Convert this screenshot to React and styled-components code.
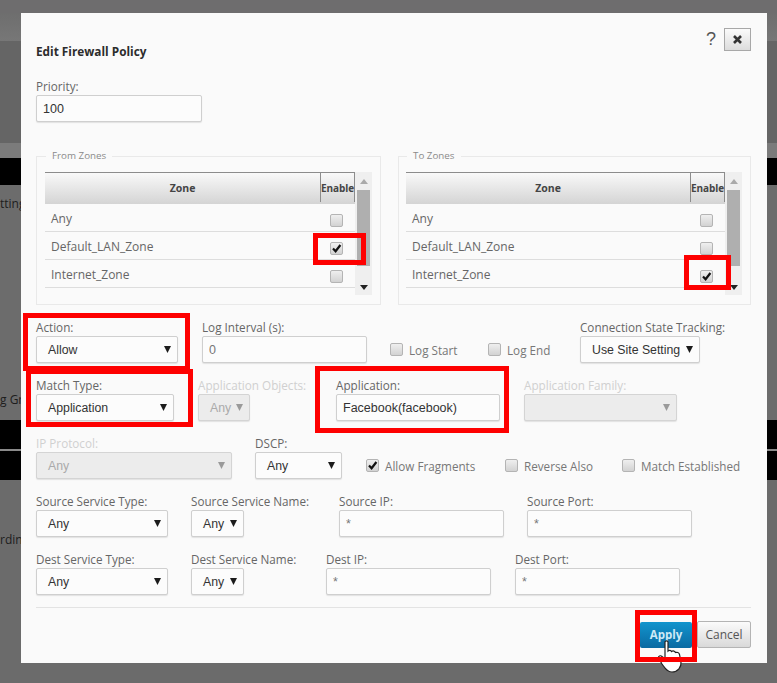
import React from 'react';
import styled, { createGlobalStyle } from 'styled-components';

const GlobalStyle = createGlobalStyle`
	html, body {
		margin: 0;
		padding: 0;
		background: #6b6b6b;
	}
	body {
		font-family: "Open Sans", "Liberation Sans", sans-serif;
		overflow: hidden;
	}
`;

const Page = styled.div`
	position: relative;
	width: 777px;
	height: 683px;
	overflow: hidden;
`;
const Backdrop = styled.div`
	display: flex;
	flex-direction: column;
	height: 100%;
`;
const Strip = styled.div`
	height: ${({ $h }) => $h}px;
	flex: ${({ $grow }) => ($grow ? 1 : 'none')};
	background: ${({ $bg }) => $bg};
`;
const Peek = styled.div`
	width: 21px;
	overflow: hidden;
	display: flex;
	justify-content: flex-start;
	padding-top: ${({ $top }) => $top}px;
	font-size: 12px;
	line-height: 16px;
	color: #1d1d1d;
	white-space: nowrap;
`;
const Modal = styled.div`
	position: absolute;
	top: 13px;
	left: 21px;
	width: 746px;
	height: 650px;
	box-sizing: border-box;
	padding: 15px 16px 0 15px;
	background: #fafafa;
`;
const Header = styled.div`
	display: flex;
	justify-content: space-between;
	height: 51px;
`;
const Title = styled.div`
	margin-top: 15px;
	font-size: 11.8px;
	line-height: 16px;
	font-weight: 700;
	color: #2c2c2c;
`;
const HeaderTools = styled.div`
	display: flex;
	gap: 8px;
`;
const Help = styled.span`
	font-family: "Liberation Sans", sans-serif;
	font-size: 18px;
	line-height: 23px;
	color: #555;
`;
const CloseButton = styled.div`
	width: 27px;
	height: 23px;
	box-sizing: border-box;
	display: flex;
	align-items: center;
	justify-content: center;
	border: 1px solid #a8a8a8;
	background: linear-gradient(#fbfbfb, #dcdcdc);
`;
const Label = styled.div`
	height: 16px;
	font-size: 11.7px;
	line-height: 15px;
	white-space: nowrap;
	color: ${({ $disabled }) => ($disabled ? '#d0d0d0' : '#666')};
`;
const Field = styled.div`
	position: relative;
	width: ${({ $w }) => $w}px;
`;
const TextInput = styled.input`
	display: block;
	width: 100%;
	height: 27px;
	box-sizing: border-box;
	padding: 0 6px;
	border: 1px solid #cfcfcf;
	border-radius: 2px;
	background: #fcfcfc;
	box-shadow: 0 1px 1px #e2e2e2;
	outline: none;
	font-family: "Liberation Sans", sans-serif;
	font-size: 12.5px;
	color: ${({ $dark }) => ($dark ? '#333' : '#777')};
`;
const SelectBox = styled.div`
	display: flex;
	align-items: center;
	justify-content: space-between;
	height: 27px;
	box-sizing: border-box;
	padding: 0 6px 0 11px;
	border: 1px solid ${({ $disabled }) => ($disabled ? '#d4d4d4' : '#cfcfcf')};
	border-radius: 2px;
	background: ${({ $disabled }) => ($disabled ? '#ececec' : '#fcfcfc')};
	box-shadow: 0 1px 1px #e2e2e2;
	font-family: "Liberation Sans", sans-serif;
	font-size: 12.3px;
	white-space: nowrap;
	color: ${({ $disabled }) => ($disabled ? '#aaa' : '#333')};
`;
const Caret = styled.svg`
	flex: none;
	width: 7px;
	height: 7px;
	fill: ${({ $disabled }) => ($disabled ? '#9a9a9a' : '#1c1c1c')};
`;
const Zones = styled.div`
	display: grid;
	grid-template-columns: 345px 353px;
	gap: 17px;
	margin-top: 27px;
`;
const ZoneSet = styled.fieldset`
	margin: 0;
	min-width: 0;
	height: 156px;
	box-sizing: border-box;
	padding: 9px 8px 0 ${({ $padLeft }) => $padLeft}px;
	border: 1px solid #e9e9e9;
`;
const ZoneLegend = styled.legend`
	margin-left: 1px;
	padding: 0 6px;
	font-size: 9.8px;
	line-height: 14px;
	color: #8a8a8a;
`;
const ZoneInner = styled.div`
	display: flex;
	height: 123px;
`;
const ZoneTable = styled.div`
	width: ${({ $w }) => $w}px;
`;
const ZoneHead = styled.div`
	display: grid;
	grid-template-columns: 1fr 35px;
	height: 32px;
	box-sizing: border-box;
	border-top: 1px solid #8c8c8c;
	background: linear-gradient(#f9f9f9, #d4d4d4);
	font-size: 10.5px;
	font-weight: 700;
	line-height: 31px;
	color: #444;
	text-align: center;
`;
const EnableHead = styled.div`
	border-left: 1px solid #8c8c8c;
	border-right: 1px solid #8c8c8c;
	height: 29px;
	font-size: 10px;
	letter-spacing: -0.1px;
`;
const ZoneRow = styled.div`
	display: grid;
	grid-template-columns: 1fr 35px;
	align-items: center;
	height: 28px;
	box-sizing: border-box;
	padding: 2px 0 0 6px;
	border-bottom: 1px solid #dddddd;
	font-size: 12px;
	color: #666;
`;
const CheckCell = styled.div`
	display: flex;
	justify-content: center;
	padding: 4px 2px 0 0;
`;
const Scrollbar = styled.div`
	flex: none;
	width: 17px;
	display: flex;
	flex-direction: column;
	align-items: center;
	background: #efefef;
`;
const ScrollArrow = styled.svg`
	flex: none;
	width: 8px;
	height: 5px;
	margin: ${({ $m }) => $m};
	fill: ${({ $dark }) => ($dark ? '#222' : '#aaa')};
`;
const ScrollThumb = styled.div`
	width: 13px;
	flex: 1;
	background: #afafaf;
`;
const Box = styled.div`
	position: relative;
	flex: none;
	width: 13px;
	height: 13px;
	box-sizing: border-box;
	border: 1px solid #b4b4b4;
	border-radius: 2px;
	background: linear-gradient(#efefef, #d2d2d2);
`;
const CheckMark = styled.svg`
	display: block;
	width: 11px;
	height: 11px;
	stroke: #111;
	stroke-width: 2.2;
	fill: none;
`;
const CheckWrap = styled.div`
	display: flex;
	align-items: center;
	gap: 6px;
	height: 27px;
	font-size: 11.7px;
	white-space: nowrap;
	color: #777;
`;
const FormRows = styled.div`
	display: flex;
	flex-direction: column;
	gap: 15px;
	margin-top: 15px;
`;
const FormRow = styled.div`
	display: grid;
	grid-template-columns: ${({ $cols }) => $cols};
	align-items: end;
`;
const Divider = styled.div`
	height: 1px;
	margin-top: 12px;
	background: #e3e3e3;
`;
const Footer = styled.div`
	display: flex;
	justify-content: flex-end;
	align-items: center;
	gap: 5px;
	margin-top: 13px;
`;
const ApplyWrap = styled.div`
	position: relative;
`;
const ApplyButton = styled.div`
	width: 52px;
	height: 26px;
	border-radius: 2px;
	background: linear-gradient(#1294cd, #0a6aa2);
	font-size: 11.5px;
	font-weight: 700;
	line-height: 26px;
	text-align: center;
	color: #cdeaf6;
`;
const CancelButton = styled.div`
	width: 54px;
	height: 27px;
	box-sizing: border-box;
	border: 1px solid #b4b4b4;
	border-radius: 2px;
	background: linear-gradient(#fbfbfb, #d9d9d9);
	font-size: 12px;
	line-height: 25px;
	text-align: center;
	color: #555;
`;
const HandCursor = styled.svg`
	position: absolute;
	left: 17px;
	top: 18px;
	width: 27px;
	height: 33px;
	z-index: 1;
`;
const Highlight = styled.div`
	position: absolute;
	inset: ${({ $inset }) => $inset};
	border: 5px solid #fe0000;
	z-index: 2;
	pointer-events: none;
`;

const Check = ({ checked, children }) => (
	<Box>
		{checked && (
			<CheckMark viewBox="0 0 11 11">
				<path d="M2 5.5 L4.6 8.2 L9.4 2" />
			</CheckMark>
		)}
		{children}
	</Box>
);

const CheckField = ({ label, checked }) => (
	<CheckWrap>
		<Check checked={checked} />
		{label}
	</CheckWrap>
);

const Select = ({ value, disabled }) => (
	<SelectBox $disabled={disabled}>
		{value || <span />}
		<Caret $disabled={disabled} viewBox="0 0 7 7">
			<path d="M0 0 H7 L3.5 7 Z" />
		</Caret>
	</SelectBox>
);

const Zone = ({ legend, width, padLeft, checkedZone, mark }) => (
	<ZoneSet $padLeft={padLeft}>
		<ZoneLegend>{legend}</ZoneLegend>
		<ZoneInner>
			<ZoneTable $w={width}>
				<ZoneHead>
					<div>Zone</div>
					<EnableHead>Enable</EnableHead>
				</ZoneHead>
				{['Any', 'Default_LAN_Zone', 'Internet_Zone'].map((zone) => (
					<ZoneRow key={zone}>
						{zone}
						<CheckCell>
							<Check checked={zone === checkedZone}>
								{zone === checkedZone && <Highlight $inset={mark} />}
							</Check>
						</CheckCell>
					</ZoneRow>
				))}
			</ZoneTable>
			<Scrollbar>
				<ScrollArrow $m="7px 0 6px" viewBox="0 0 8 5">
					<path d="M0 5 L4 0 L8 5 Z" />
				</ScrollArrow>
				<ScrollThumb />
				<ScrollArrow $dark $m="19px 0 5px" viewBox="0 0 8 5">
					<path d="M0 0 H8 L4 5 Z" />
				</ScrollArrow>
			</Scrollbar>
		</ZoneInner>
	</ZoneSet>
);

const App = () => {
	return (
		<Page>
			<GlobalStyle />
			<Backdrop>
				<Strip $h={13} $bg="#6e6d6e" />
				<Strip $h={28} $bg="linear-gradient(#6e6e6e, #777)" />
				<Strip $h={102} $bg="#656565" />
				<Strip $h={15} $bg="#7b7b7b" />
				<Strip $h={27} $bg="#000" />
				<Strip $h={235} $bg="#6c6c6c">
					<Peek $top={11}>tting</Peek>
					<Peek $top={180}>g Gr</Peek>
				</Strip>
				<Strip $h={29} $bg="#000" />
				<Strip $h={2} $bg="#8a8a8a" />
				<Strip $h={29} $bg="#000" />
				<Strip $grow $bg="#6b6b6b">
					<Peek $top={52}>rdin</Peek>
				</Strip>
			</Backdrop>
			<Modal>
				<Header>
					<Title>Edit Firewall Policy</Title>
					<HeaderTools>
						<Help>?</Help>
						<CloseButton>
							<svg width="11" height="11" viewBox="0 0 11 11">
								<path d="M2 2 L9 9 M9 2 L2 9" stroke="#333" strokeWidth="2.6" fill="none" />
							</svg>
						</CloseButton>
					</HeaderTools>
				</Header>
				<Field $w={166}>
					<Label>Priority:</Label>
					<TextInput $dark readOnly value="100" />
				</Field>
				<Zones>
					<Zone legend="From Zones" width={310} padLeft={8} checkedZone="Default_LAN_Zone" mark="-10px -24px -11px -18px" />
					<Zone legend="To Zones" width={319} padLeft={7} checkedZone="Internet_Zone" mark="-16px -19px -8px -17px" />
				</Zones>
				<FormRows>
					<FormRow $cols="166px 188px 98px 92px 1fr">
						<Field $w={142}>
							<Label>Action:</Label>
							<Select value="Allow" />
							<Highlight $inset="-7px -12px -8px -13px" />
						</Field>
						<Field $w={165}>
							<Label>Log Interval (s):</Label>
							<TextInput readOnly value="0" />
						</Field>
						<CheckField label="Log Start" />
						<CheckField label="Log End" />
						<Field $w={120}>
							<Label>Connection State Tracking:</Label>
							<Select value="Use Site Setting" />
						</Field>
					</FormRow>
					<FormRow $cols="162px 138px 188px 1fr">
						<Field $w={138}>
							<Label>Match Type:</Label>
							<Select value="Application" />
							<Highlight $inset="-9px -19px -6px -10px" />
						</Field>
						<Field $w={52}>
							<Label $disabled>Application Objects:</Label>
							<Select disabled value="Any" />
						</Field>
						<Field $w={164}>
							<Label>Application:</Label>
							<TextInput $dark readOnly value="Facebook(facebook)" />
							<Highlight $inset="-12px -9px -12px -21px" />
						</Field>
						<Field $w={153}>
							<Label $disabled>Application Family:</Label>
							<Select disabled />
						</Field>
					</FormRow>
					<FormRow $cols="219px 111px 139px 117px 1fr">
						<Field $w={196}>
							<Label $disabled>IP Protocol:</Label>
							<Select disabled value="Any" />
						</Field>
						<Field $w={87}>
							<Label>DSCP:</Label>
							<Select value="Any" />
						</Field>
						<CheckField label="Allow Fragments" checked />
						<CheckField label="Reverse Also" />
						<CheckField label="Match Established" />
					</FormRow>
					<FormRow $cols="155px 148px 188px 1fr">
						<Field $w={132}>
							<Label>Source Service Type:</Label>
							<Select value="Any" />
						</Field>
						<Field $w={53}>
							<Label>Source Service Name:</Label>
							<Select value="Any" />
						</Field>
						<Field $w={165}>
							<Label>Source IP:</Label>
							<TextInput readOnly value="*" />
						</Field>
						<Field $w={165}>
							<Label>Source Port:</Label>
							<TextInput readOnly value="*" />
						</Field>
					</FormRow>
					<FormRow $cols="155px 135px 189px 1fr">
						<Field $w={132}>
							<Label>Dest Service Type:</Label>
							<Select value="Any" />
						</Field>
						<Field $w={53}>
							<Label>Dest Service Name:</Label>
							<Select value="Any" />
						</Field>
						<Field $w={165}>
							<Label>Dest IP:</Label>
							<TextInput readOnly value="*" />
						</Field>
						<Field $w={165}>
							<Label>Dest Port:</Label>
							<TextInput readOnly value="*" />
						</Field>
					</FormRow>
				</FormRows>
				<Divider />
				<Footer>
					<ApplyWrap>
						<ApplyButton>Apply</ApplyButton>
						<HandCursor viewBox="0 0 27 33">
							<path
								d="M8 2 C8 0.5 11 0.5 11 2 V11 C12 10 14 10 14.5 11.5 C16 10.5 18 11 18.5 12.5 C20 12 22 12.5 22.5 14.5 L24 22 C24.5 27 21 32 15 32 C10 32 8 28 5 24 L1.5 18 C1 16 3.5 15 5 16.5 L8 19 Z"
								fill="#fff"
								stroke="#222"
								strokeWidth="1.2"
							/>
						</HandCursor>
						<Highlight $inset="-12px -5px -14px -5px" />
					</ApplyWrap>
					<CancelButton>Cancel</CancelButton>
				</Footer>
			</Modal>
		</Page>
	);
};

export default App;
